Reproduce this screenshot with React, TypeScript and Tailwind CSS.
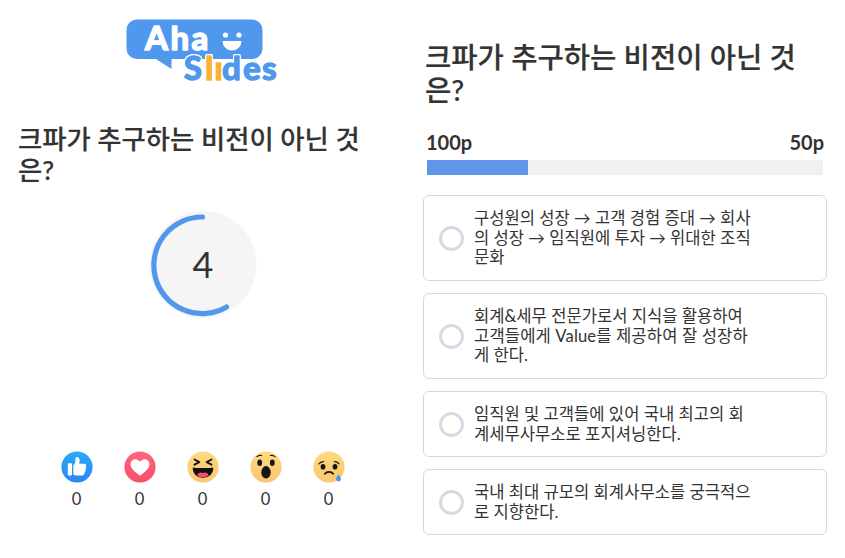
import React from "react";

const kr = "font-['Lato','Noto_Sans_CJK_KR',sans-serif]";

function Logo() {
  return (
    <svg className="ml-[120px] block h-[70px] w-[165px]" viewBox="120 15 165 70">
      <path d="M137 19.500H252a10.500 10.500 0 0 1 10.500 10.500V48.500a10.500 10.500 0 0 1-10.500 10.500H171.500V69L156 59H137a10.500 10.500 0 0 1-10.500-10.500V30a10.500 10.500 0 0 1 10.500-10.500Z" fill="#4f98ee" />
      <text x="145 170.500 191.500" y="50" fontFamily="Lato, sans-serif" fontWeight="700" fontSize="33" fill="#fff" stroke="#fff" strokeWidth="1.600" strokeLinejoin="round">Aha</text>
      <text
        x="184 205 214.200 222.300 243.300 262.300"
        y="80.200"
        className="[filter:drop-shadow(1px_0_0_white)_drop-shadow(-1px_0_0_white)_drop-shadow(0_1px_0_white)_drop-shadow(0_-1px_0_white)]"
        fontFamily="Lato, sans-serif"
        fontWeight="700"
        fontSize="33"
        fill="#4f98ee"
        stroke="#4f98ee"
        strokeWidth="1.500"
        strokeLinejoin="round"
      >
        S<tspan fill="#f9b233" stroke="#f9b233">lı</tspan>des
      </text>
      <circle cx="225.500" cy="35" r="2.600" fill="#fff" />
      <circle cx="239" cy="35" r="2.600" fill="#fff" />
      <path d="M222.500 41H241.500a9.500 9.500 0 0 1-19 0Z" fill="#fff" />
    </svg>
  );
}

function Face({ kind }: { kind: string }) {
  return (
    <svg className="block size-8" viewBox="0 0 32 32">
      <defs>
        <linearGradient id="like" x1="0" y1="0" x2="0" y2="1"><stop stopColor="#27adf6" /><stop offset="1" stopColor="#2f83f5" /></linearGradient>
        <linearGradient id="love" x1="0" y1="0" x2="0" y2="1"><stop stopColor="#ff6680" /><stop offset="1" stopColor="#f84f69" /></linearGradient>
        <linearGradient id="face" x1="0" y1="0" x2="0" y2="1"><stop stopColor="#ffd980" /><stop offset="1" stopColor="#fbc56e" /></linearGradient>
      </defs>
      <circle cx="16" cy="16" r="15.600" fill={kind === "like" ? "url(#like)" : kind === "love" ? "url(#love)" : "url(#face)"} />
      {kind === "like" && (
        <g fill="#fff">
          <rect x="6.800" y="12.300" width="4.200" height="12.200" rx="1" />
          <path d="M12.300 14.500C14.500 12.500 14.300 10 14.500 7.400c.2-2.300 3.600-1.800 4 .9.300 1.600 0 3.200-.3 4.400h5c2 0 2.600 1.800 1.500 3 .8 1 .6 2-.3 2.700.5 1.200.1 2.200-.8 2.800.1 2-.8 3.200-2.600 3.200h-4.500c-1.800 0-3-.3-4.200-1Z" />
        </g>
      )}
      {kind === "love" && <path d="M16 24.800C12 21.500 6.600 18 6.600 13.200c0-5.300 6.600-6.900 9.400-2.400 2.800-4.500 9.400-2.900 9.400 2.400C25.400 18 20 21.500 16 24.800Z" fill="#fff" />}
      {kind === "laugh" && (
        <g>
          <path d="M7.500 8.500l4.800 2.700-4.800 2.500M24.500 8.500L19.700 11.200l4.800 2.500" fill="none" stroke="#161616" strokeWidth="1.900" strokeLinecap="round" strokeLinejoin="round" />
          <path d="M5.800 16.500c3 .8 17.400 .8 20.400 0 .4 6-3.800 10.200-10.200 10.200s-10.600-4.200-10.200-10.200Z" fill="#111" />
          <path d="M10.300 24.500c1.300-3.400 3.700-3.200 5.700-2.400 2-.8 4.400-1 5.700 2.400-3.300 2.600-8.100 2.600-11.400 0Z" fill="#f0506a" />
        </g>
      )}
      {kind === "wow" && (
        <g fill="#161616">
          <ellipse cx="9.700" cy="11.700" rx="2.400" ry="3.200" /><ellipse cx="22.300" cy="11.700" rx="2.400" ry="3.200" /><ellipse cx="16" cy="21.300" rx="4.700" ry="6.200" />
          <path d="M7 5.700c1.200-1.300 2.800-1.700 4.500-1.200M25 5.700c-1.200-1.300-2.800-1.700-4.500-1.200" fill="none" stroke="#161616" strokeWidth="1.200" strokeLinecap="round" />
        </g>
      )}
      {kind === "sad" && (
        <g fill="#161616">
          <ellipse cx="10" cy="15.800" rx="2.400" ry="2.800" /><ellipse cx="22" cy="15.800" rx="2.400" ry="2.800" />
          <path d="M6 12.800c1.200-1.500 2.800-2.200 4.700-2.200M26 12.800c-1.200-1.500-2.800-2.200-4.700-2.200" fill="none" stroke="#161616" strokeWidth="1.200" strokeLinecap="round" />
          <path d="M11.800 22.700c2-2.500 6.400-2.500 8.400 0" fill="none" stroke="#161616" strokeWidth="1.800" strokeLinecap="round" />
          <path d="M25.500 23.500c1.600 2 2.400 3.300 2.400 4.700a2.400 2.400 0 0 1-4.800 0c0-1.400.8-2.700 2.400-4.700Z" fill="#4b98ec" />
        </g>
      )}
    </svg>
  );
}

const options = [
  { h: "h-[86px]", lines: ["구성원의 성장 → 고객 경험 증대 → 회사", "의 성장 → 임직원에 투자 → 위대한 조직", "문화"] },
  { h: "h-[86px]", lines: ["회계&세무 전문가로서 지식을 활용하여", "고객들에게 Value를 제공하여 잘 성장하", "게 한다."] },
  { h: "h-[66px]", lines: ["임직원 및 고객들에 있어 국내 최고의 회", "계세무사무소로 포지셔닝한다."] },
  { h: "h-[66px]", lines: ["국내 최대 규모의 회계사무소를 궁극적으", "로 지향한다."] },
];

export default function App() {
  return (
    <div className={`flex h-[558px] w-[845px] overflow-hidden bg-white text-[#333] ${kr}`}>
      <section className="w-[405px] pt-[15px]">
        <Logo />
        <h1 className="ml-[18px] mt-[39px] whitespace-nowrap text-[26.350px] font-medium leading-[31px] [-webkit-text-stroke:0.2px_#333]">크파가 추구하는 비전이 아닌 것<br />은?</h1>
        <div className="ml-[148px] mt-[24px] grid size-[110px] place-items-center">
          <svg className="col-start-1 row-start-1 block size-[110px]" viewBox="0 0 110 110">
            <circle cx="55" cy="54.500" r="53.500" fill="#f5f5f5" />
            <path d="M54.500 7A48.300 48.300 0 1 0 78.500 97" fill="none" stroke="#4f98ee" strokeWidth="5.200" strokeLinecap="round" />
          </svg>
          <span className="col-start-1 row-start-1 mb-0.5 text-[36px] leading-none">4</span>
        </div>
        <div className="ml-[45px] mt-[131px] flex">
          {["like", "love", "laugh", "wow", "sad"].map((k) => (
            <div key={k} className="flex w-[63px] flex-col items-center">
              <Face kind={k} />
              <span className="mt-[5px] text-[16.500px] leading-[22px]">0</span>
            </div>
          ))}
        </div>
      </section>
      <main className="w-[440px] pl-[18px] pt-[41px]">
        <h2 className="ml-[2px] whitespace-nowrap text-[28.600px] font-medium leading-[33px] [-webkit-text-stroke:0.2px_#333]">크파가 추구하는 비전이 아닌 것<br />은?</h2>
        <div className="ml-[3px] mt-[23px] flex w-[398px] justify-between text-[20px] font-bold leading-6"><span>100p</span><span>50p</span></div>
        <div className="ml-1 mt-[6px] h-[15px] w-[396px] bg-[#f0f0f0]"><div className="h-full w-[101px] bg-[#5f96ea]" /></div>
        <div className="mt-[20px] flex w-[404px] flex-col gap-3">
          {options.map((o) => (
            <div key={o.lines[0]} className={`flex items-center rounded-[6px] border border-[#d5d6df] pl-[15px] ${o.h}`}>
              <span className="size-[25px] shrink-0 rounded-full border-[3px] border-[#d8dae3]" />
              <p className="ml-[10px] whitespace-nowrap pt-px text-[16.600px] leading-[19.600px]">
                {o.lines.map((l) => <span key={l} className={l.includes("Value") ? "block tracking-[0.130px]" : "block"}>{l}</span>)}
              </p>
            </div>
          ))}
        </div>
      </main>
    </div>
  );
}
